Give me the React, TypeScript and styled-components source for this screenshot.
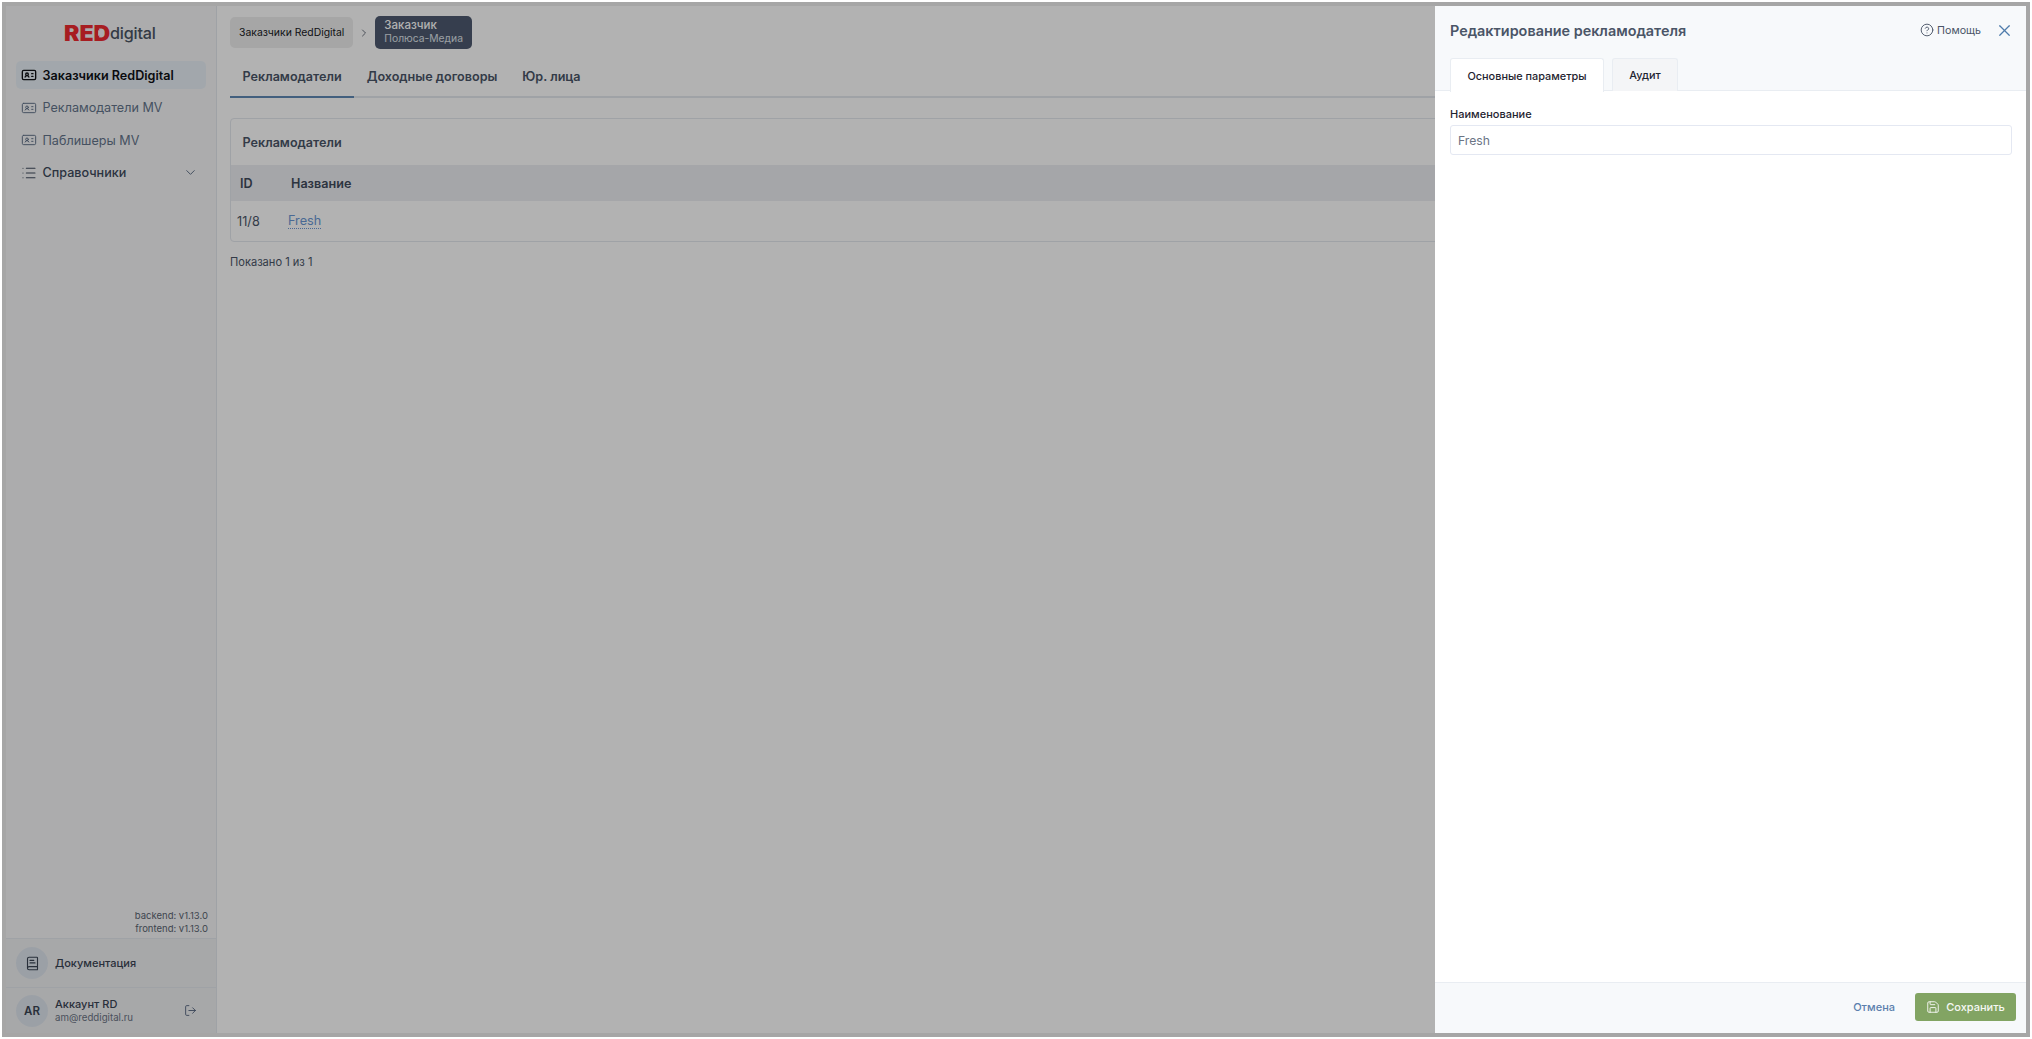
import React from "react";
import styled, { createGlobalStyle } from "styled-components";
import { BookText, ChevronDown, ChevronRight, CircleHelp, IdCard, List, LogOut, Save, X } from "lucide-react";

const Global = createGlobalStyle`
  html, body { margin: 0; padding: 0; height: 100%; background: #fff; }
  body { font-family: Inter, "Noto Sans", sans-serif; overflow: hidden; }
  * { box-sizing: border-box; }
`;

const Frame = styled.div`
  position: relative;
  margin: 2px;
  width: 2028px;
  height: 1035px;
  border: 4px solid #a6a6a6;
  overflow: hidden;
  display: flex;
  background: #fff;
`;

const Sidebar = styled.aside`
  width: 211px;
  flex: none;
  display: flex;
  flex-direction: column;
  background: #f6f7f8;
  border-right: 1px solid #e4e8ee;
`;

const LogoRow = styled.div`
  height: 55px;
  display: flex;
  align-items: center;
  gap: 3px;
  padding-left: 58px;
`;

const LogoRed = styled.span`
  position: relative;
  display: inline-block;
  width: 43px;
  font-size: 21px;
  font-weight: 900;
  line-height: 1;
  color: #f02a30;
  transform: scaleX(1.1);
  transform-origin: left center;
`;

const LogoPlay = styled.i`
  position: absolute;
  left: 30.5px;
  top: 7px;
  width: 0;
  height: 0;
  border-left: 4.5px solid #f6f7f8;
  border-top: 3.5px solid transparent;
  border-bottom: 3.5px solid transparent;
`;

const LogoDigital = styled.span`
  font-size: 16.2px;
  font-weight: 500;
  line-height: 1;
  color: #4b5563;
  letter-spacing: -0.2px;
`;

const Nav = styled.nav`
  display: flex;
  flex-direction: column;
  gap: 4.5px;
  padding: 0 10px;
`;

const NavItem = styled.div<{ $active?: boolean }>`
  height: 28px;
  display: flex;
  align-items: center;
  gap: 5.5px;
  padding: 0 5px;
  border-radius: 5px;
  font-size: 12.6px;
  font-weight: ${(p) => (p.$active ? 600 : 400)};
  color: ${(p) => (p.$active ? "#0f1115" : "#64748b")};
  background: ${(p) => (p.$active ? "#e9f0f7" : "transparent")};
  white-space: nowrap;
  svg { flex: none; }
`;

const NavGroup = styled(NavItem)`
  color: #3f4a5c;
  font-weight: 500;
  justify-content: flex-start;
`;

const NavChevron = styled.span`
  margin-left: auto;
  margin-right: 3px;
  display: flex;
  color: #64748b;
`;

const Spacer = styled.div`
  flex: 1;
`;

const Versions = styled.div`
  padding: 0 8px 3px 0;
  text-align: right;
  font-size: 9.5px;
  line-height: 12.5px;
  color: #5b6472;
`;

const FootRow = styled.div<{ $h: number }>`
  height: ${(p) => p.$h}px;
  flex: none;
  display: flex;
  align-items: center;
  gap: 7px;
  padding: 0 10px;
  border-top: 1px solid #e4e8ee;
  background: #f0f1f3;
`;

const Circle = styled.div`
  width: 32px;
  height: 32px;
  flex: none;
  border-radius: 50%;
  display: flex;
  align-items: center;
  justify-content: center;
  background: #dfe6ee;
  color: #3a4454;
  font-size: 11.5px;
  font-weight: 600;
`;

const DocLabel = styled.div`
  font-size: 11px;
  font-weight: 500;
  color: #3a4454;
`;

const Account = styled.div`
  flex: 1;
  display: flex;
  flex-direction: column;
  gap: 1px;
`;

const AccountName = styled.div`
  font-size: 11px;
  line-height: 14px;
  font-weight: 500;
  color: #3a4454;
`;

const AccountMail = styled.div`
  font-size: 9.7px;
  line-height: 12px;
  color: #6b7484;
`;

const LogoutBtn = styled.div`
  display: flex;
  margin-right: 9px;
  color: #4b5d78;
`;

const Main = styled.main`
  flex: 1;
  min-width: 0;
  padding: 10px 13px;
  display: flex;
  flex-direction: column;
`;

const Crumbs = styled.div`
  display: flex;
  align-items: center;
  height: 33px;
`;

const Crumb = styled.div`
  height: 31px;
  display: flex;
  align-items: center;
  padding: 0 9px;
  border-radius: 5px;
  background: #eeeeee;
  font-size: 10.4px;
  color: #17191d;
`;

const CrumbSep = styled.span`
  width: 22px;
  display: flex;
  justify-content: center;
  color: #6b7280;
`;

const CrumbActive = styled.div`
  height: 33px;
  padding: 3px 9px;
  border-radius: 5px;
  background: #4e5a70;
  font-size: 11.5px;
  line-height: 13px;
  font-weight: 500;
  color: #fff;
`;

const CrumbSub = styled.div`
  font-size: 10.3px;
  font-weight: 400;
  color: #dfe3ea;
`;

const PageTabs = styled.div`
  display: flex;
  margin-top: 7px;
  height: 42px;
  border-bottom: 2px solid #e4e8ee;
`;

const PageTab = styled.div<{ $active?: boolean }>`
  height: 42px;
  display: flex;
  align-items: center;
  padding: 0 12.5px;
  font-size: 12.6px;
  font-weight: 600;
  color: #4a5567;
  border-bottom: 2px solid ${(p) => (p.$active ? "#5f89b5" : "transparent")};
`;

const Card = styled.section`
  margin-top: 20px;
  border: 1px solid #e4e8ee;
  border-radius: 4px;
  height: 124px;
  display: flex;
  flex-direction: column;
`;

const CardTitle = styled.div`
  height: 46px;
  display: flex;
  align-items: center;
  padding: 0 11.5px;
  font-size: 12.6px;
  font-weight: 600;
  color: #4a5567;
`;

const HeadRow = styled.div`
  height: 36px;
  display: flex;
  align-items: center;
  background: #eceef2;
  font-size: 12.6px;
  font-weight: 600;
  color: #414b5c;
`;

const HeadId = styled.div`
  width: 60px;
  padding-left: 9px;
`;

const BodyRow = styled.div`
  flex: 1;
  display: flex;
  align-items: center;
  font-size: 12.7px;
  color: #4a5567;
`;

const BodyId = styled.div`
  width: 57px;
  padding-left: 6px;
`;

const RowLink = styled.span`
  color: #6a97d4;
  border-bottom: 1px dotted #6a97d4;
  line-height: 15px;
`;

const Shown = styled.div`
  margin-top: 13px;
  font-size: 11.1px;
  color: #4a5567;
`;

const Overlay = styled.div`
  position: absolute;
  inset: 0;
  background: rgba(0, 0, 0, 0.3);
`;

const Drawer = styled.div`
  position: absolute;
  top: 0;
  right: 0;
  bottom: 0;
  width: 591px;
  display: flex;
  flex-direction: column;
  background: #fff;
`;

const DrawerHead = styled.header`
  height: 85px;
  flex: none;
  background: #f7f9fb;
  border-bottom: 1px solid #e9edf2;
  display: flex;
  flex-direction: column;
  padding: 0 15px;
`;

const DrawerTop = styled.div`
  height: 48px;
  margin-bottom: 4px;
  display: flex;
  align-items: center;
`;

const DrawerTitle = styled.h2`
  margin: 0;
  font-size: 14.4px;
  font-weight: 600;
  color: #4a5567;
`;

const Help = styled.div`
  margin-left: auto;
  display: flex;
  align-items: center;
  gap: 3px;
  font-size: 10.7px;
  color: #4a5567;
`;

const CloseBtn = styled.div`
  display: flex;
  margin-left: 14px;
  margin-right: -3px;
  color: #4f7cab;
`;

const DrawerTabs = styled.div`
  display: flex;
  gap: 8px;
  height: 33px;
  margin-bottom: -1px;
`;

const DrawerTab = styled.div<{ $active?: boolean }>`
  display: flex;
  align-items: center;
  justify-content: center;
  height: ${(p) => (p.$active ? 34 : 33)}px;
  width: ${(p) => (p.$active ? 154 : 66)}px;
  font-size: 10.9px;
  font-weight: 500;
  color: #1f2430;
  background: ${(p) => (p.$active ? "#fff" : "#f4f5f7")};
  border: 1px solid #e9edf2;
  border-bottom: 0;
  border-radius: 3px 3px 0 0;
`;

const DrawerBody = styled.div`
  flex: 1;
  padding: 16px 14px 0 15px;
`;

const FieldLabel = styled.label`
  display: block;
  font-size: 11px;
  line-height: 15px;
  font-weight: 500;
  color: #1f2430;
`;

const Field = styled.div`
  margin-top: 3px;
  height: 30px;
  display: flex;
  align-items: center;
  padding: 0 7px;
  border: 1px solid #e4e8f2;
  border-radius: 3px;
  font-size: 12.2px;
  color: #6b7484;
`;

const DrawerFoot = styled.footer`
  height: 51px;
  flex: none;
  display: flex;
  align-items: center;
  justify-content: flex-end;
  gap: 20px;
  padding: 0 10px 2px 0;
  background: #f7f9fb;
  border-top: 1px solid #e9edf2;
`;

const CancelBtn = styled.div`
  font-size: 11px;
  font-weight: 500;
  color: #5b80ad;
`;

const SaveBtn = styled.div`
  width: 101px;
  height: 28px;
  display: flex;
  align-items: center;
  justify-content: center;
  gap: 6px;
  border-radius: 3px;
  background: #82a463;
  font-size: 11px;
  font-weight: 500;
  color: #f6f8f4;
`;

export default function App() {
  return (
    <>
      <Global />
      <Frame>
        <Sidebar>
          <LogoRow>
            <LogoRed>
              RED
              <LogoPlay />
            </LogoRed>
            <LogoDigital>digital</LogoDigital>
          </LogoRow>
          <Nav>
            <NavItem $active>
              <IdCard size={16} strokeWidth={2} />
              Заказчики RedDigital
            </NavItem>
            <NavItem>
              <IdCard size={16} strokeWidth={1.5} />
              Рекламодатели MV
            </NavItem>
            <NavItem>
              <IdCard size={16} strokeWidth={1.5} />
              Паблишеры MV
            </NavItem>
            <NavGroup>
              <List size={16} strokeWidth={1.6} />
              Справочники
              <NavChevron>
                <ChevronDown size={15} strokeWidth={1.6} />
              </NavChevron>
            </NavGroup>
          </Nav>
          <Spacer />
          <Versions>
            <div>backend: v1.13.0</div>
            <div>frontend: v1.13.0</div>
          </Versions>
          <FootRow $h={49}>
            <Circle>
              <BookText size={15} strokeWidth={1.8} />
            </Circle>
            <DocLabel>Документация</DocLabel>
          </FootRow>
          <FootRow $h={46}>
            <Circle>AR</Circle>
            <Account>
              <AccountName>Аккаунт RD</AccountName>
              <AccountMail>am@reddigital.ru</AccountMail>
            </Account>
            <LogoutBtn>
              <LogOut size={13} strokeWidth={1.6} />
            </LogoutBtn>
          </FootRow>
        </Sidebar>
        <Main>
          <Crumbs>
            <Crumb>Заказчики RedDigital</Crumb>
            <CrumbSep>
              <ChevronRight size={12} />
            </CrumbSep>
            <CrumbActive>
              Заказчик
              <CrumbSub>Полюса-Медиа</CrumbSub>
            </CrumbActive>
          </Crumbs>
          <PageTabs>
            <PageTab $active>Рекламодатели</PageTab>
            <PageTab>Доходные договоры</PageTab>
            <PageTab>Юр. лица</PageTab>
          </PageTabs>
          <Card>
            <CardTitle>Рекламодатели</CardTitle>
            <HeadRow>
              <HeadId>ID</HeadId>
              <div>Название</div>
            </HeadRow>
            <BodyRow>
              <BodyId>11/8</BodyId>
              <RowLink>Fresh</RowLink>
            </BodyRow>
          </Card>
          <Shown>Показано 1 из 1</Shown>
        </Main>
        <Overlay />
        <Drawer>
          <DrawerHead>
            <DrawerTop>
              <DrawerTitle>Редактирование рекламодателя</DrawerTitle>
              <Help>
                <CircleHelp size={14} strokeWidth={1.6} />
                Помощь
              </Help>
              <CloseBtn>
                <X size={19} strokeWidth={1.5} />
              </CloseBtn>
            </DrawerTop>
            <DrawerTabs>
              <DrawerTab $active>Основные параметры</DrawerTab>
              <DrawerTab>Аудит</DrawerTab>
            </DrawerTabs>
          </DrawerHead>
          <DrawerBody>
            <FieldLabel>Наименование</FieldLabel>
            <Field>Fresh</Field>
          </DrawerBody>
          <DrawerFoot>
            <CancelBtn>Отмена</CancelBtn>
            <SaveBtn>
              <Save size={14} strokeWidth={1.6} />
              Сохранить
            </SaveBtn>
          </DrawerFoot>
        </Drawer>
      </Frame>
    </>
  );
}
